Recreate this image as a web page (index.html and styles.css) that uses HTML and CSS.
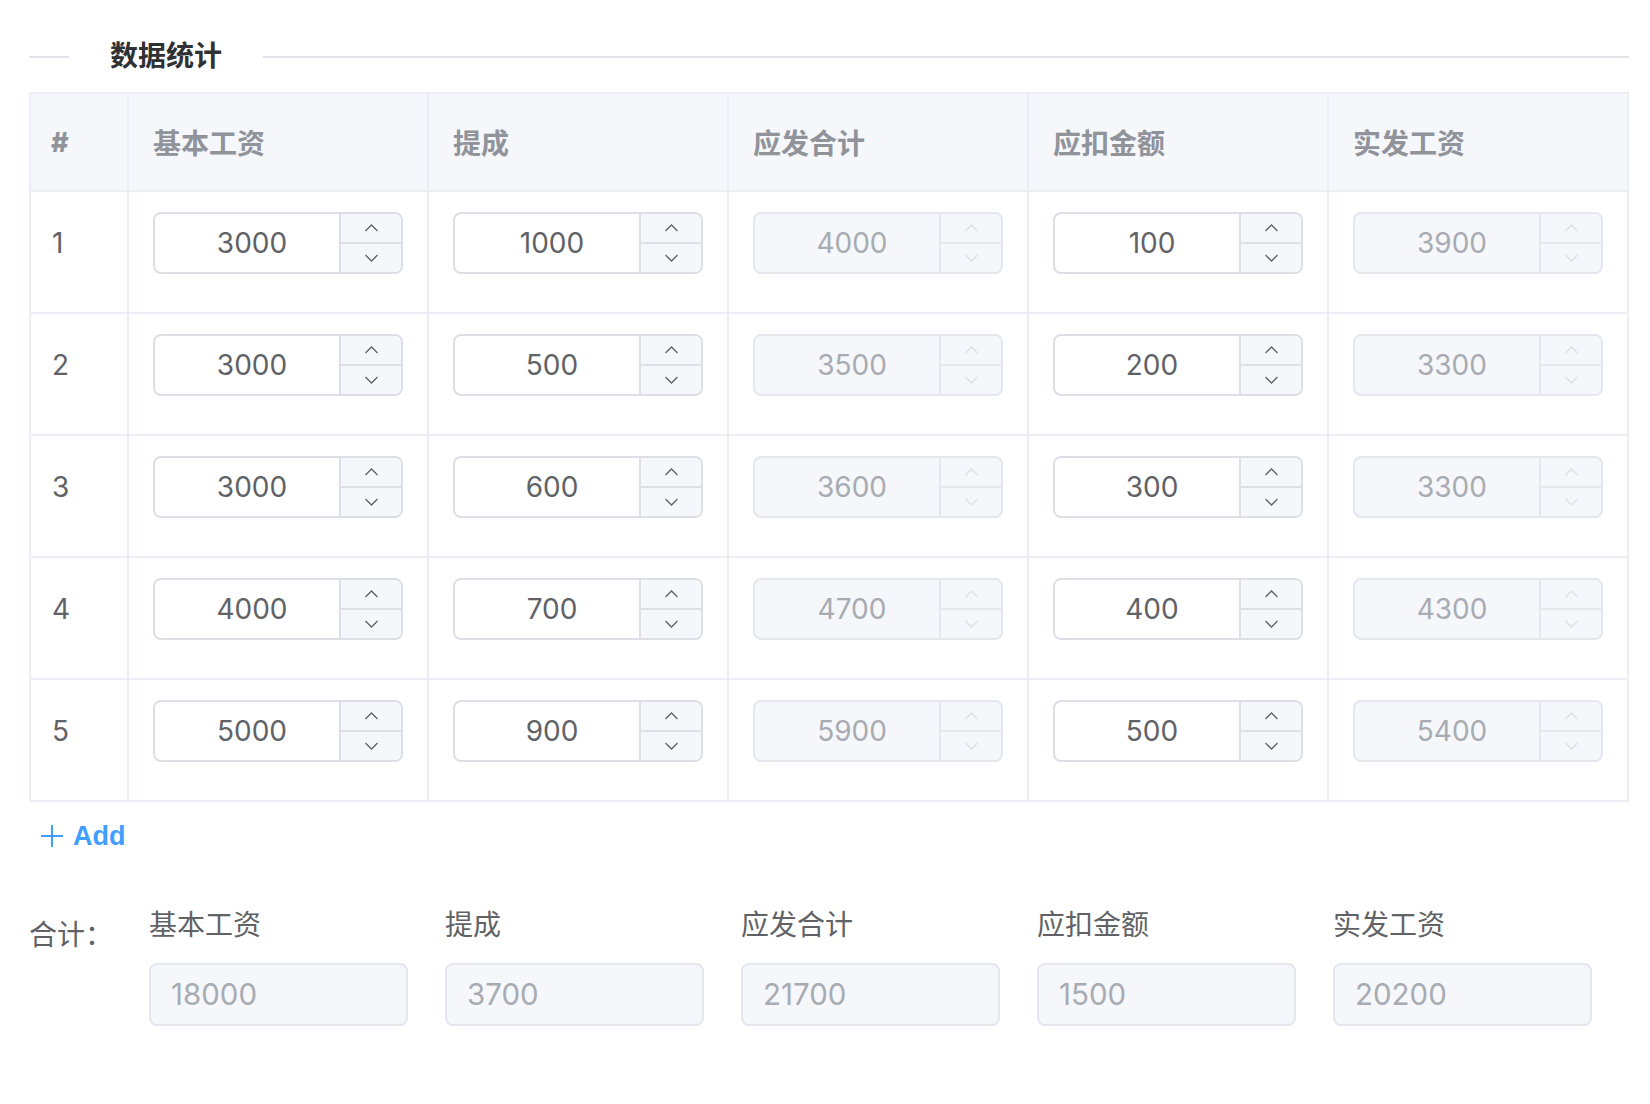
FILE: index.html
```html
<!DOCTYPE html>
<html lang="zh-CN">
<head>
<meta charset="utf-8">
<title>数据统计</title>
<link rel="stylesheet" href="styles.css">
</head>
<body>
<div class="page">
  <div class="divider">
    <span class="divider-line divider-line-short"></span>
    <span class="divider-text">数据统计</span>
    <span class="divider-line divider-line-long"></span>
  </div>

  <div class="table">
    <div class="th th-index">#</div>
    <div class="th">基本工资</div>
    <div class="th">提成</div>
    <div class="th">应发合计</div>
    <div class="th">应扣金额</div>
    <div class="th">实发工资</div>

    <!-- row 1 -->
    <div class="td td-index">1</div>
    <div class="td"><div class="num-input"><span class="num-value">3000</span><span class="num-controls"><span class="num-btn"><svg class="chev" viewBox="0 0 14 8"><polyline points="1,7 7,1 13,7"/></svg></span><span class="num-btn"><svg class="chev" viewBox="0 0 14 8"><polyline points="1,1 7,7 13,1"/></svg></span></span></div></div>
    <div class="td"><div class="num-input"><span class="num-value">1000</span><span class="num-controls"><span class="num-btn"><svg class="chev" viewBox="0 0 14 8"><polyline points="1,7 7,1 13,7"/></svg></span><span class="num-btn"><svg class="chev" viewBox="0 0 14 8"><polyline points="1,1 7,7 13,1"/></svg></span></span></div></div>
    <div class="td"><div class="num-input is-disabled"><span class="num-value">4000</span><span class="num-controls"><span class="num-btn"><svg class="chev" viewBox="0 0 14 8"><polyline points="1,7 7,1 13,7"/></svg></span><span class="num-btn"><svg class="chev" viewBox="0 0 14 8"><polyline points="1,1 7,7 13,1"/></svg></span></span></div></div>
    <div class="td"><div class="num-input"><span class="num-value">100</span><span class="num-controls"><span class="num-btn"><svg class="chev" viewBox="0 0 14 8"><polyline points="1,7 7,1 13,7"/></svg></span><span class="num-btn"><svg class="chev" viewBox="0 0 14 8"><polyline points="1,1 7,7 13,1"/></svg></span></span></div></div>
    <div class="td"><div class="num-input is-disabled"><span class="num-value">3900</span><span class="num-controls"><span class="num-btn"><svg class="chev" viewBox="0 0 14 8"><polyline points="1,7 7,1 13,7"/></svg></span><span class="num-btn"><svg class="chev" viewBox="0 0 14 8"><polyline points="1,1 7,7 13,1"/></svg></span></span></div></div>

    <!-- row 2 -->
    <div class="td td-index">2</div>
    <div class="td"><div class="num-input"><span class="num-value">3000</span><span class="num-controls"><span class="num-btn"><svg class="chev" viewBox="0 0 14 8"><polyline points="1,7 7,1 13,7"/></svg></span><span class="num-btn"><svg class="chev" viewBox="0 0 14 8"><polyline points="1,1 7,7 13,1"/></svg></span></span></div></div>
    <div class="td"><div class="num-input"><span class="num-value">500</span><span class="num-controls"><span class="num-btn"><svg class="chev" viewBox="0 0 14 8"><polyline points="1,7 7,1 13,7"/></svg></span><span class="num-btn"><svg class="chev" viewBox="0 0 14 8"><polyline points="1,1 7,7 13,1"/></svg></span></span></div></div>
    <div class="td"><div class="num-input is-disabled"><span class="num-value">3500</span><span class="num-controls"><span class="num-btn"><svg class="chev" viewBox="0 0 14 8"><polyline points="1,7 7,1 13,7"/></svg></span><span class="num-btn"><svg class="chev" viewBox="0 0 14 8"><polyline points="1,1 7,7 13,1"/></svg></span></span></div></div>
    <div class="td"><div class="num-input"><span class="num-value">200</span><span class="num-controls"><span class="num-btn"><svg class="chev" viewBox="0 0 14 8"><polyline points="1,7 7,1 13,7"/></svg></span><span class="num-btn"><svg class="chev" viewBox="0 0 14 8"><polyline points="1,1 7,7 13,1"/></svg></span></span></div></div>
    <div class="td"><div class="num-input is-disabled"><span class="num-value">3300</span><span class="num-controls"><span class="num-btn"><svg class="chev" viewBox="0 0 14 8"><polyline points="1,7 7,1 13,7"/></svg></span><span class="num-btn"><svg class="chev" viewBox="0 0 14 8"><polyline points="1,1 7,7 13,1"/></svg></span></span></div></div>

    <!-- row 3 -->
    <div class="td td-index">3</div>
    <div class="td"><div class="num-input"><span class="num-value">3000</span><span class="num-controls"><span class="num-btn"><svg class="chev" viewBox="0 0 14 8"><polyline points="1,7 7,1 13,7"/></svg></span><span class="num-btn"><svg class="chev" viewBox="0 0 14 8"><polyline points="1,1 7,7 13,1"/></svg></span></span></div></div>
    <div class="td"><div class="num-input"><span class="num-value">600</span><span class="num-controls"><span class="num-btn"><svg class="chev" viewBox="0 0 14 8"><polyline points="1,7 7,1 13,7"/></svg></span><span class="num-btn"><svg class="chev" viewBox="0 0 14 8"><polyline points="1,1 7,7 13,1"/></svg></span></span></div></div>
    <div class="td"><div class="num-input is-disabled"><span class="num-value">3600</span><span class="num-controls"><span class="num-btn"><svg class="chev" viewBox="0 0 14 8"><polyline points="1,7 7,1 13,7"/></svg></span><span class="num-btn"><svg class="chev" viewBox="0 0 14 8"><polyline points="1,1 7,7 13,1"/></svg></span></span></div></div>
    <div class="td"><div class="num-input"><span class="num-value">300</span><span class="num-controls"><span class="num-btn"><svg class="chev" viewBox="0 0 14 8"><polyline points="1,7 7,1 13,7"/></svg></span><span class="num-btn"><svg class="chev" viewBox="0 0 14 8"><polyline points="1,1 7,7 13,1"/></svg></span></span></div></div>
    <div class="td"><div class="num-input is-disabled"><span class="num-value">3300</span><span class="num-controls"><span class="num-btn"><svg class="chev" viewBox="0 0 14 8"><polyline points="1,7 7,1 13,7"/></svg></span><span class="num-btn"><svg class="chev" viewBox="0 0 14 8"><polyline points="1,1 7,7 13,1"/></svg></span></span></div></div>

    <!-- row 4 -->
    <div class="td td-index">4</div>
    <div class="td"><div class="num-input"><span class="num-value">4000</span><span class="num-controls"><span class="num-btn"><svg class="chev" viewBox="0 0 14 8"><polyline points="1,7 7,1 13,7"/></svg></span><span class="num-btn"><svg class="chev" viewBox="0 0 14 8"><polyline points="1,1 7,7 13,1"/></svg></span></span></div></div>
    <div class="td"><div class="num-input"><span class="num-value">700</span><span class="num-controls"><span class="num-btn"><svg class="chev" viewBox="0 0 14 8"><polyline points="1,7 7,1 13,7"/></svg></span><span class="num-btn"><svg class="chev" viewBox="0 0 14 8"><polyline points="1,1 7,7 13,1"/></svg></span></span></div></div>
    <div class="td"><div class="num-input is-disabled"><span class="num-value">4700</span><span class="num-controls"><span class="num-btn"><svg class="chev" viewBox="0 0 14 8"><polyline points="1,7 7,1 13,7"/></svg></span><span class="num-btn"><svg class="chev" viewBox="0 0 14 8"><polyline points="1,1 7,7 13,1"/></svg></span></span></div></div>
    <div class="td"><div class="num-input"><span class="num-value">400</span><span class="num-controls"><span class="num-btn"><svg class="chev" viewBox="0 0 14 8"><polyline points="1,7 7,1 13,7"/></svg></span><span class="num-btn"><svg class="chev" viewBox="0 0 14 8"><polyline points="1,1 7,7 13,1"/></svg></span></span></div></div>
    <div class="td"><div class="num-input is-disabled"><span class="num-value">4300</span><span class="num-controls"><span class="num-btn"><svg class="chev" viewBox="0 0 14 8"><polyline points="1,7 7,1 13,7"/></svg></span><span class="num-btn"><svg class="chev" viewBox="0 0 14 8"><polyline points="1,1 7,7 13,1"/></svg></span></span></div></div>

    <!-- row 5 -->
    <div class="td td-index">5</div>
    <div class="td"><div class="num-input"><span class="num-value">5000</span><span class="num-controls"><span class="num-btn"><svg class="chev" viewBox="0 0 14 8"><polyline points="1,7 7,1 13,7"/></svg></span><span class="num-btn"><svg class="chev" viewBox="0 0 14 8"><polyline points="1,1 7,7 13,1"/></svg></span></span></div></div>
    <div class="td"><div class="num-input"><span class="num-value">900</span><span class="num-controls"><span class="num-btn"><svg class="chev" viewBox="0 0 14 8"><polyline points="1,7 7,1 13,7"/></svg></span><span class="num-btn"><svg class="chev" viewBox="0 0 14 8"><polyline points="1,1 7,7 13,1"/></svg></span></span></div></div>
    <div class="td"><div class="num-input is-disabled"><span class="num-value">5900</span><span class="num-controls"><span class="num-btn"><svg class="chev" viewBox="0 0 14 8"><polyline points="1,7 7,1 13,7"/></svg></span><span class="num-btn"><svg class="chev" viewBox="0 0 14 8"><polyline points="1,1 7,7 13,1"/></svg></span></span></div></div>
    <div class="td"><div class="num-input"><span class="num-value">500</span><span class="num-controls"><span class="num-btn"><svg class="chev" viewBox="0 0 14 8"><polyline points="1,7 7,1 13,7"/></svg></span><span class="num-btn"><svg class="chev" viewBox="0 0 14 8"><polyline points="1,1 7,7 13,1"/></svg></span></span></div></div>
    <div class="td"><div class="num-input is-disabled"><span class="num-value">5400</span><span class="num-controls"><span class="num-btn"><svg class="chev" viewBox="0 0 14 8"><polyline points="1,7 7,1 13,7"/></svg></span><span class="num-btn"><svg class="chev" viewBox="0 0 14 8"><polyline points="1,1 7,7 13,1"/></svg></span></span></div></div>
  </div>

  <div class="add-btn">
    <svg class="plus" viewBox="0 0 22 22"><line x1="11" y1="0" x2="11" y2="22"/><line x1="0" y1="11" x2="22" y2="11"/></svg>
    <span>Add</span>
  </div>

  <div class="summary">
    <div class="summary-label">合计：</div>
    <div class="summary-grid">
      <div class="field"><div class="field-label">基本工资</div><div class="field-input">18000</div></div>
      <div class="field"><div class="field-label">提成</div><div class="field-input">3700</div></div>
      <div class="field"><div class="field-label">应发合计</div><div class="field-input">21700</div></div>
      <div class="field"><div class="field-label">应扣金额</div><div class="field-input">1500</div></div>
      <div class="field"><div class="field-label">实发工资</div><div class="field-input">20200</div></div>
    </div>
  </div>
</div>
</body>
</html>
```

FILE: styles.css
```css
html, body {
  margin: 0;
  padding: 0;
  background: #ffffff;
}

body {
  font-family: "Liberation Sans", "Noto Sans CJK SC", sans-serif;
  font-size: 28px;
  color: #606266;
}

.page {
  padding: 37px 20px 0 29px;
}

/* divider */
.divider {
  display: flex;
  align-items: center;
  width: 1600px;
  height: 40px;
  margin-bottom: 15px;
}

.divider-line {
  display: block;
  height: 2px;
  background: #e2e4e9;
}

.divider-line-short {
  width: 40px;
}

.divider-line-long {
  flex: 1;
}

.divider-text {
  padding: 0 41px;
  font-size: 28px;
  font-weight: 700;
  color: #303133;
  line-height: 40px;
}

/* table */
.table {
  display: grid;
  grid-template-columns: 96px repeat(5, 298px);
  grid-template-rows: 96px;
  grid-auto-rows: 120px;
  gap: 2px;
  padding: 2px;
  width: max-content;
  background: #ebeef5;
}

.th {
  background: #f5f7fa;
  color: #909399;
  font-weight: 700;
  display: flex;
  align-items: center;
  padding-left: 24px;
}

.th-index {
  padding-left: 20px;
  font-family: Inter, "Liberation Sans", sans-serif;
  font-weight: 800;
  font-size: 27px;
}

.td {
  background: #ffffff;
  padding: 20px 24px 0 24px;
  box-sizing: border-box;
}

.td-index {
  padding: 20px 0 0 21px;
  line-height: 62px;
  color: #606266;
  font-family: Inter, "Liberation Sans", sans-serif;
  font-size: 28px;
}

/* number input */
.num-input {
  display: flex;
  box-sizing: border-box;
  width: 250px;
  height: 62px;
  border: 2px solid #dcdfe6;
  border-radius: 8px;
  overflow: hidden;
  background: #ffffff;
}

.num-value {
  flex: 1;
  text-align: center;
  padding-left: 10px;
  line-height: 58px;
  color: #606266;
  font-family: Inter, "Liberation Sans", sans-serif;
  font-size: 28px;
}

.num-controls {
  width: 62px;
  box-sizing: border-box;
  border-left: 2px solid #dcdfe6;
  display: flex;
  flex-direction: column;
  background: #f5f7fa;
}

.num-btn {
  flex: 1;
  display: flex;
  align-items: center;
  justify-content: center;
}

.num-btn + .num-btn {
  border-top: 2px solid #dcdfe6;
}

.chev {
  width: 15px;
  height: 8px;
  fill: none;
  stroke: #606266;
  stroke-width: 1.3;
}

.num-input.is-disabled {
  background: #f5f7fa;
  border-color: #e4e7ed;
}

.num-input.is-disabled .num-value {
  color: #a8abb2;
}

.num-input.is-disabled .num-controls {
  border-left-color: #e4e7ed;
}

.num-input.is-disabled .num-btn + .num-btn {
  border-top-color: #e4e7ed;
}

.num-input.is-disabled .chev {
  stroke: #dcdfe6;
}

/* add button */
.add-btn {
  display: inline-flex;
  align-items: center;
  gap: 10px;
  height: 44px;
  margin: 12px 0 0 12px;
  color: #409eff;
  font-weight: 700;
  font-size: 27px;
}

.plus {
  width: 22px;
  height: 22px;
  stroke: #409eff;
  stroke-width: 2;
}

/* summary */
.summary {
  display: flex;
  margin-top: 46px;
}

.summary-label {
  width: 120px;
  line-height: 64px;
  color: #606266;
}

.summary-grid {
  display: grid;
  grid-template-columns: repeat(5, 259px);
  column-gap: 37px;
}

.field-label {
  line-height: 43px;
  padding-bottom: 16px;
  color: #606266;
}

.field-input {
  box-sizing: border-box;
  height: 63px;
  border: 2px solid #e4e7ed;
  border-radius: 8px;
  background: #f5f7fa;
  color: #a8abb2;
  padding-left: 20px;
  line-height: 59px;
  font-family: Inter, "Liberation Sans", sans-serif;
  font-size: 29.5px;
}
```
